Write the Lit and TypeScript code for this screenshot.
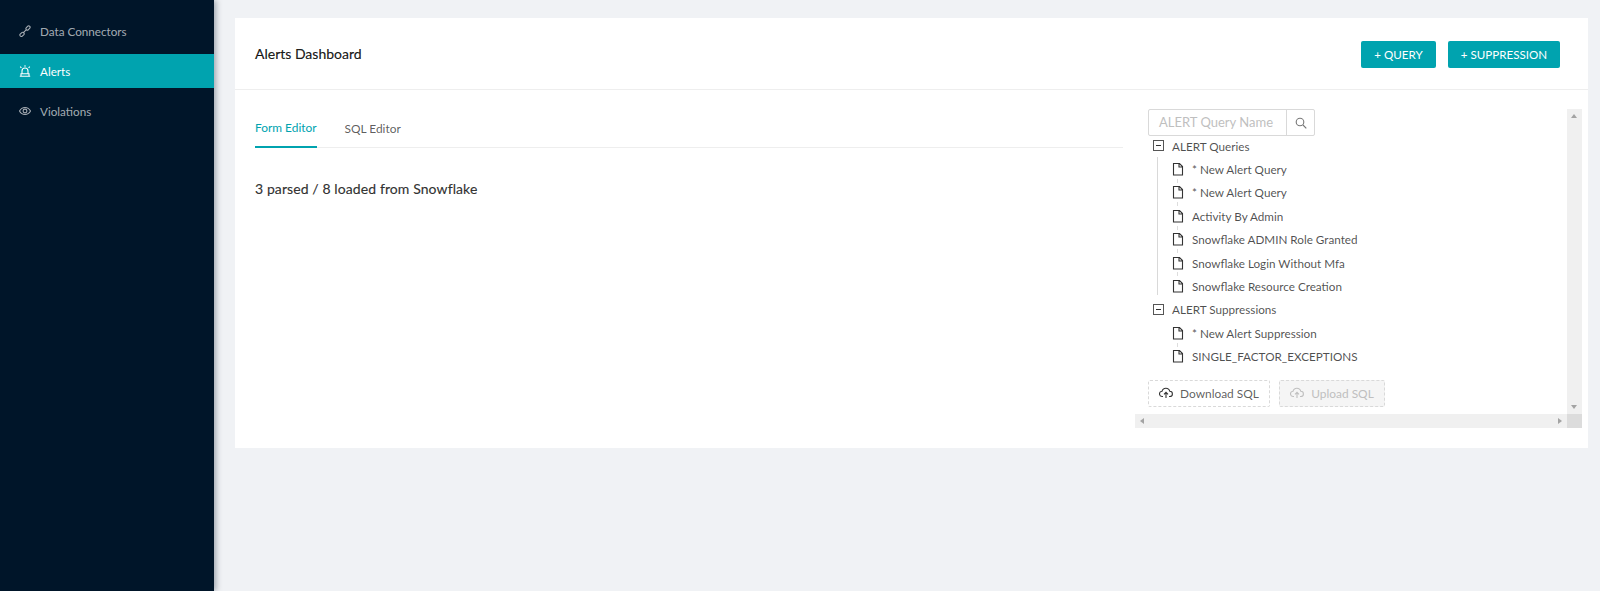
import { LitElement, html, css } from "lit";
import { customElement } from "lit/decorators.js";

const fileIcon = html`<svg class="file" viewBox="0 0 12 14" width="12" height="14"><path d="M1.500 1.500h6l3 3v8.500h-9z M7 1.500v3.500h3.500" fill="none" stroke="#333" stroke-width="1.100"/></svg>`;
const minus = html`<span class="sw"><i></i></span>`;
const cloud = (c: string) => html`<svg viewBox="0 0 14 12" width="14" height="12"><path d="M4 9.500H3.200A2.600 2.600 0 0 1 3 4.300 4 4 0 0 1 10.800 4.300 2.600 2.600 0 0 1 10.800 9.500H10 M7 11V5.500 M5 7.300 7 5.300 9 7.300" fill="none" stroke="${c}" stroke-width="1.100"/></svg>`;

@customElement("app-root")
export class AppRoot extends LitElement {
  static styles = css`
    :host { display: block; height: 591px; overflow: hidden; background: #f0f2f5; font-family: Lato, "Open Sans", sans-serif; color: #333; }
    .page { display: flex; height: 591px; }
    .side { width: 214px; flex: none; background: #001529; box-shadow: 2px 0 6px rgba(0,21,41,.35); padding-top: 14px; box-sizing: border-box; }
    .nav { display: flex; align-items: center; height: 34px; margin-bottom: 6px; padding-left: 19px; gap: 9px; font-size: 11.700px; color: rgba(255,255,255,.65); }
    .nav.on { background: #00a3af; color: #fff; }
    .nav svg { flex: none; }
    .main { flex: 1; padding: 18px 12px 0 21px; min-width: 0; }
    .card { background: #fff; height: 430px; }
    .head { height: 72px; box-sizing: border-box; border-bottom: 1px solid #eee; display: flex; align-items: center; justify-content: space-between; padding: 0 28px 0 20px; }
    .title { font-size: 14px; font-weight: 400; color: rgba(0,0,0,.9); -webkit-text-stroke: .2px; }
    .btns { display: flex; gap: 12px; margin-top: 1px; }
    .btn { height: 27px; box-sizing: border-box; background: #00a3af; color: #fff; font-size: 11.600px; border-radius: 2px; display: flex; align-items: center; justify-content: center; }
    .q { width: 75px; } .s { width: 112px; }
    .body { display: flex; padding: 19px 6px 0 20px; }
    .left { width: 868px; flex: none; }
    .tabs { display: flex; height: 38px; gap: 28px; border-bottom: 1px solid #eee; font-size: 11.900px; color: rgba(0,0,0,.65); }
    .tab { height: 39px; box-sizing: border-box; display: flex; align-items: center; }
    .tab.on { color: #00a3af; border-bottom: 2px solid #00a3af; }
    .count { margin-top: 32px; font-size: 14px; color: rgba(0,0,0,.8); -webkit-text-stroke: .2px; letter-spacing: .1px; }
    .tree { margin-left: 12px; width: 447px; height: 319px; position: relative; }
    .inner { padding-left: 13px; }
    .search { display: flex; width: 167px; height: 27px; box-sizing: border-box; border: 1px solid #d9d9d9; border-radius: 2px; font-size: 13px; color: #bfbfbf; margin-bottom: -2px; }
    .search span { flex: 1; padding-left: 10px; line-height: 24px; border-right: 1px solid #d9d9d9; }
    .search b { width: 27px; display: flex; align-items: center; justify-content: center; }
    .row { display: flex; align-items: center; height: 23.400px; font-size: 11.700px; color: rgba(0,0,0,.7); position: relative; }
    .row.top { gap: 8px; padding-left: 5px; }
    .row.leaf { gap: 8px; padding-left: 24px; }
    .row.leaf + .row.leaf::before { content: ""; position: absolute; left: 29px; top: -2px; height: 4px; width: 1px; background: #ddd; }
    .kids { position: relative; }
    .kids.line::before { content: ""; position: absolute; left: 9px; top: 0; bottom: 3px; width: 1px; background: #d9d9d9; }
    .sw { width: 11px; height: 11px; border: 1px solid #555; box-sizing: border-box; display: inline-flex; align-items: center; justify-content: center; }
    .sw i { width: 5px; height: 1px; background: #333; }
    .file { flex: none; }
    .actions { display: flex; gap: 9px; margin-top: 12px; }
    .dash { height: 27px; box-sizing: border-box; border: 1px dashed #d9d9d9; border-radius: 2px; display: flex; align-items: center; justify-content: center; gap: 7px; font-size: 11.900px; color: rgba(0,0,0,.65); }
    .dl { width: 122px; } .ul { width: 106px; background: #f5f5f5; color: #bfbfbf; }
    .vbar { position: absolute; right: 0; top: 0; width: 15px; height: 305px; background: #f0f0f0; }
    .hbar { position: absolute; left: 0; right: 0; bottom: 0; height: 14px; background: #f0f0f0; }
    .corner { position: absolute; right: 0; bottom: 0; width: 15px; height: 14px; background: #dcdcdc; }
    .ar { position: absolute; width: 0; height: 0; border: 3px solid transparent; }
    .up { border-bottom: 4px solid #a3a3a3; border-top: 0; left: 4px; top: 5px; }
    .down { border-top: 4px solid #a3a3a3; border-bottom: 0; left: 4px; bottom: 5px; }
    .lt { border-right: 4px solid #a3a3a3; border-left: 0; left: 5px; top: 4px; }
    .rt { border-left: 4px solid #a3a3a3; border-right: 0; right: 20px; top: 4px; }
  `;

  render() {
    const q = ["* New Alert Query", "* New Alert Query", "Activity By Admin", "Snowflake ADMIN Role Granted", "Snowflake Login Without Mfa", "Snowflake Resource Creation"];
    const s = ["* New Alert Suppression", "SINGLE_FACTOR_EXCEPTIONS"];
    const leaf = (t: string) => html`<div class="row leaf">${fileIcon}<span>${t}</span></div>`;
    return html`<div class="page">
      <aside class="side">
        <div class="nav"><svg width="12" height="12" viewBox="0 0 12 12" fill="none" stroke="#a6adb4" stroke-width="1.100"><path d="M1.200 9.200 2.800 7.600a1.200 1.200 0 0 1 1.700 0L4.900 8a1.200 1.200 0 0 1 0 1.700L3.300 11.200a1.200 1.200 0 0 1-1.700 0L1.200 10.800a1.200 1.200 0 0 1 0-1.600zM7.200 2.800 8.800 1.200a1.200 1.200 0 0 1 1.700 0l.3.300a1.200 1.200 0 0 1 0 1.700L9.200 4.800a1.200 1.200 0 0 1-1.700 0l-.3-.3a1.200 1.200 0 0 1 0-1.700zM4.600 7.400 7.400 4.600"/></svg><span>Data Connectors</span></div>
        <div class="nav on"><svg width="12" height="12" viewBox="0 0 12 12" fill="none" stroke="#fff" stroke-width="1.100"><path d="M3 8.500V6a3 3 0 0 1 6 0v2.500M.8 11.300h10.400M2 8.700h8v2.500H2zM6 .3v1.500M1.200 1.700l1.200 1.200M10.800 1.700 9.600 2.900"/></svg><span>Alerts</span></div>
        <div class="nav"><svg width="12" height="12" viewBox="0 0 12 12" fill="none" stroke="#a6adb4" stroke-width="1.100"><path d="M.5 6C2 3.300 4 2.500 6 2.500s4 .8 5.500 3.500C10 8.700 8 9.500 6 9.500S2 8.700.5 6z"/><circle cx="6" cy="6" r="1.900"/></svg><span>Violations</span></div>
      </aside>
      <main class="main">
        <section class="card">
          <div class="head"><div class="title">Alerts Dashboard</div><div class="btns"><div class="btn q">+ QUERY</div><div class="btn s">+ SUPPRESSION</div></div></div>
          <div class="body">
            <div class="left">
              <div class="tabs"><div class="tab on">Form Editor</div><div class="tab">SQL Editor</div></div>
              <div class="count">3 parsed / 8 loaded from Snowflake</div>
            </div>
            <div class="tree">
              <div class="inner">
                <div class="search"><span>ALERT Query Name</span><b><svg width="12" height="12" viewBox="0 0 12 12" fill="none" stroke="#777" stroke-width="1.100"><circle cx="5" cy="5" r="3.800"/><path d="M8 8l3.300 3.300"/></svg></b></div>
                <div class="row top">${minus}<span>ALERT Queries</span></div>
                <div class="kids line">${q.map(leaf)}</div>
                <div class="row top">${minus}<span>ALERT Suppressions</span></div>
                <div class="kids">${s.map(leaf)}</div>
                <div class="actions"><div class="dash dl">${cloud("#333")}<span>Download SQL</span></div><div class="dash ul">${cloud("#bfbfbf")}<span>Upload SQL</span></div></div>
              </div>
              <div class="vbar"><i class="ar up"></i><i class="ar down"></i></div>
              <div class="hbar"><i class="ar lt"></i><i class="ar rt"></i></div>
              <div class="corner"></div>
            </div>
          </div>
        </section>
      </main>
    </div>`;
  }
}
